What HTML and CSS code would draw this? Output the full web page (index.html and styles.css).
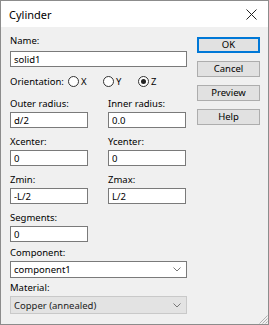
FILE: index.html
```html
<!DOCTYPE html>
<html lang="en">
<head>
  <meta charset="UTF-8" />
  <title>Cylinder</title>
  <link rel="stylesheet" href="styles.css">
</head>
<body>

<div class="dialog">
  <!-- Title bar -->
  <div class="titlebar">
    <span class="title">Cylinder</span>
    <svg class="close" width="11" height="11" viewBox="0 0 11 11">
      <path d="M0.5 0.5 L10.5 10.5 M10.5 0.5 L0.5 10.5" stroke="#222" stroke-width="1" fill="none"/>
    </svg>
  </div>

  <div class="content">
    <div class="form">
      <label class="name-label">Name:</label>
      <input class="wide" type="text" value="solid1" />

      <div class="orient">
        <span class="orient-label">Orientation:</span>
        <span class="radio"><span class="circle"></span>X</span>
        <span class="radio"><span class="circle"></span>Y</span>
        <span class="radio"><span class="circle checked"></span>Z</span>
      </div>

      <div class="pair">
        <div class="field">
          <label>Outer radius:</label>
          <input type="text" value="d/2" />
        </div>
        <div class="field">
          <label>Inner radius:</label>
          <input type="text" value="0.0" />
        </div>
      </div>

      <div class="pair">
        <div class="field">
          <label>Xcenter:</label>
          <input type="text" value="0" />
        </div>
        <div class="field">
          <label>Ycenter:</label>
          <input type="text" value="0" />
        </div>
      </div>

      <div class="pair">
        <div class="field">
          <label>Zmin:</label>
          <input type="text" value="-L/2" />
        </div>
        <div class="field">
          <label>Zmax:</label>
          <input type="text" value="L/2" />
        </div>
      </div>

      <div class="field">
        <label>Segments:</label>
        <input type="text" value="0" />
      </div>

      <label class="comp-label">Component:</label>
      <div class="select">
        <span>component1</span>
        <svg width="8" height="5" viewBox="0 0 8 5"><path d="M0.5 0.5 L4 4 L7.5 0.5" stroke="#777" fill="none"/></svg>
      </div>

      <label class="mat-label">Material:</label>
      <div class="select disabled">
        <span>Copper (annealed)</span>
        <svg width="8" height="5" viewBox="0 0 8 5"><path d="M0.5 0.5 L4 4 L7.5 0.5" stroke="#777" fill="none"/></svg>
      </div>
    </div>

    <div class="buttons">
      <button class="default">OK</button>
      <button>Cancel</button>
      <button>Preview</button>
      <button>Help</button>
    </div>
  </div>

  <svg class="grip" width="11" height="11" viewBox="0 0 11 11">
    <path d="M10.5 2.5 L2.5 10.5 M10.5 5.5 L5.5 10.5 M10.5 8.5 L8.5 10.5" stroke="#b0b0b0" fill="none"/>
  </svg>
</div>

</body>
</html>
```

FILE: styles.css
```css
body {
  margin: 0;
  font-family: "Noto Sans", "Open Sans", sans-serif;
  font-size: 9.5px;
  color: #000;
}

.dialog {
  position: relative;
  width: 267px;
  height: 323px;
  border: 1px solid #8c8c8c;
  background: #f0f0f0;
}

.titlebar {
  height: 26px;
  background: #fff;
  display: flex;
  align-items: center;
  justify-content: space-between;
  padding: 0 11px 0 8px;
}

.title {
  font-size: 11px;
}

.content {
  display: flex;
  padding: 8px 0 0 9px;
}

.form {
  width: 177px;
  display: flex;
  flex-direction: column;
}

label {
  display: block;
  line-height: 12px;
  margin-bottom: 2px;
}

.name-label {
  margin-bottom: 4px;
}

input {
  box-sizing: border-box;
  width: 78px;
  height: 16px;
  border: 1px solid #7a7a7a;
  background: #fff;
  font-family: inherit;
  font-size: 9.5px;
  padding: 0 3px;
  margin: 0;
}

input.wide {
  width: 177px;
}

.orient {
  display: flex;
  align-items: center;
  height: 14px;
  margin: 7px 0 10px;
}

.orient-label {
  width: 58px;
}

.radio {
  display: flex;
  align-items: center;
  width: 35px;
}

.circle {
  box-sizing: border-box;
  width: 11px;
  height: 11px;
  border: 1px solid #333;
  border-radius: 50%;
  background: #fff;
  margin-right: 2px;
  display: flex;
  align-items: center;
  justify-content: center;
}

.circle.checked::after {
  content: "";
  width: 5px;
  height: 5px;
  border-radius: 50%;
  background: #222;
}

.pair {
  display: flex;
  gap: 20px;
  margin-bottom: 8px;
}

.field {
  display: flex;
  flex-direction: column;
}

.comp-label {
  margin-top: 5px;
}

.mat-label {
  margin-top: 4px;
}

.select {
  box-sizing: border-box;
  height: 17px;
  border: 1px solid #7a7a7a;
  background: #fff;
  display: flex;
  align-items: center;
  justify-content: space-between;
  padding: 0 5px 0 3px;
}

.select.disabled {
  height: 18px;
  background: #e3e3e3;
  border-color: #c9c9c9;
  color: #222;
}

.buttons {
  margin-left: 10px;
  margin-top: 2px;
  display: flex;
  flex-direction: column;
  gap: 8px;
}

button {
  width: 63px;
  height: 16px;
  font-family: inherit;
  font-size: 9.5px;
  background: #e1e1e1;
  border: 1px solid #adadad;
  padding: 0;
  line-height: 12px;
}

button.default {
  border: 2px solid #0078d7;
}

.grip {
  position: absolute;
  right: 0;
  bottom: 0;
}
```
